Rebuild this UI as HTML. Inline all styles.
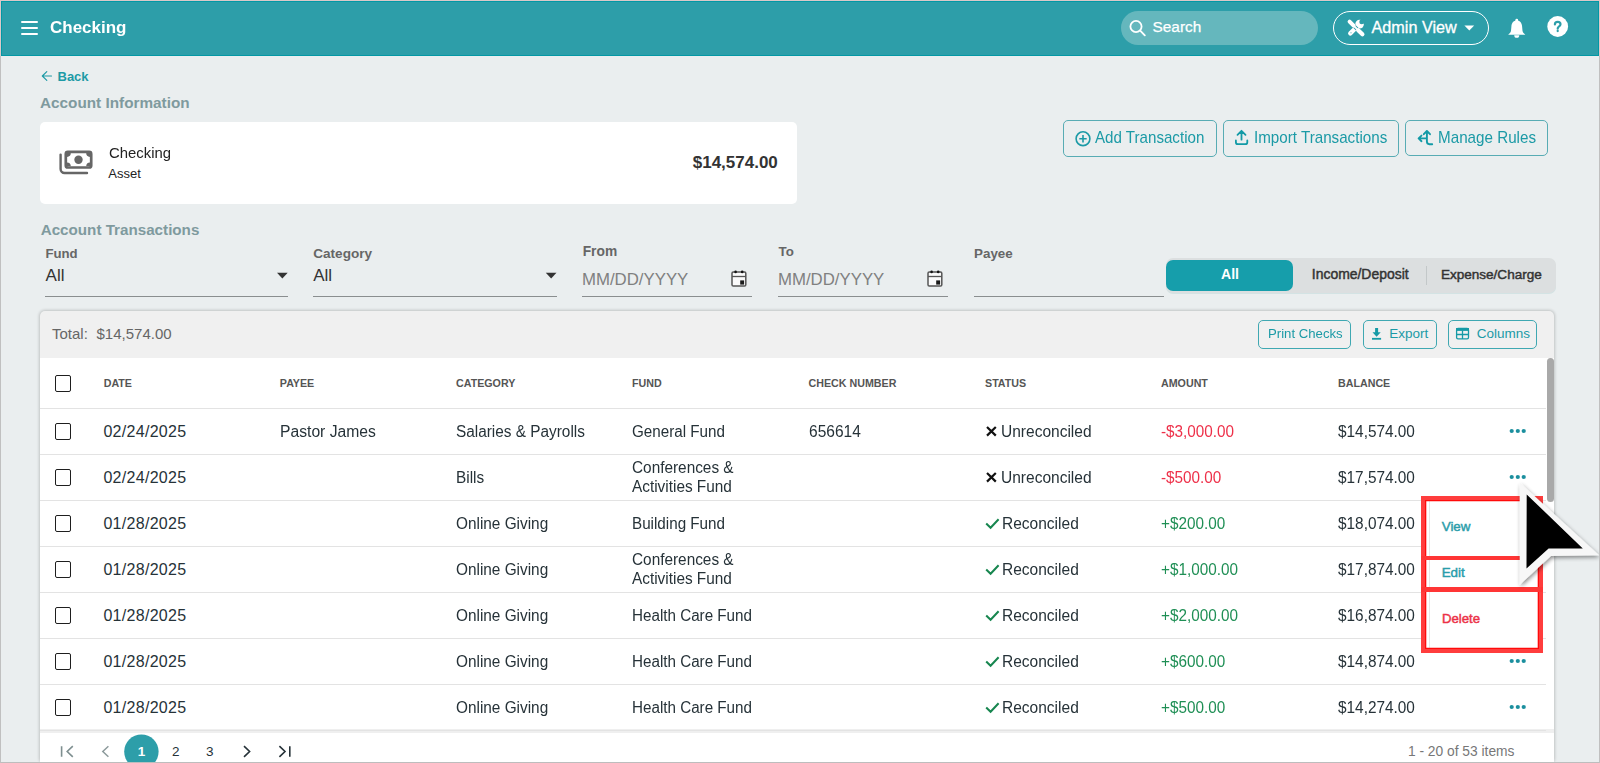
<!DOCTYPE html>
<html><head><meta charset="utf-8">
<style>
*{box-sizing:border-box;margin:0;padding:0}
html,body{width:1600px;height:763px;overflow:hidden;background:#c2c2c2;font-family:"Liberation Sans",sans-serif}
.abs{position:absolute}
.t{position:absolute;white-space:nowrap;line-height:1}
svg{position:absolute;overflow:visible}
#root{position:relative;width:1600px;height:763px;overflow:hidden}
</style></head><body><div id="root">

<div class="abs" style="left:0px;top:0px;width:1600px;height:1px;background:#dcc8c8"></div>
<div class="abs" style="left:0px;top:0px;width:1px;height:56px;background:#dcc8c8"></div>
<div class="abs" style="left:1599px;top:0px;width:1px;height:56px;background:#dcc8c8"></div>
<div class="abs" style="left:1px;top:1px;width:1598px;height:761px;background:#eaeeef"></div>
<div class="abs" style="left:1px;top:1px;width:1598px;height:55px;background:#2d9ea9;border:1px solid #0398a5"></div>
<div class="abs" style="left:21px;top:20.5px;width:17px;height:2px;background:#fff;border-radius:1px"></div>
<div class="abs" style="left:21px;top:26.5px;width:17px;height:2px;background:#fff;border-radius:1px"></div>
<div class="abs" style="left:21px;top:32.5px;width:17px;height:2px;background:#fff;border-radius:1px"></div>
<div class="t" style="left:49.50px;transform:scaleX(0.983);transform-origin:0 0;top:18.60px;font-size:17.3px;font-weight:700;color:#fff;">Checking</div>
<div class="abs" style="left:1121px;top:11px;width:197px;height:34px;background:#65b7bd;border-radius:17px"></div>
<svg style="left:0;top:0" width="1600" height="60"><circle cx="1136" cy="26.5" r="5.6" fill="none" stroke="#fff" stroke-width="1.8"/><line x1="1140.2" y1="30.7" x2="1144.8" y2="35.3" stroke="#fff" stroke-width="1.9" stroke-linecap="round"/></svg>
<div class="t" style="left:1152.50px;top:19.40px;font-size:15.4px;font-weight:400;color:#fff;-webkit-text-stroke:0.25px #fff">Search</div>
<div class="abs" style="left:1333px;top:10.5px;width:156px;height:34px;border:1.3px solid #fff;border-radius:17px"></div>
<div class="t" style="left:1371.50px;top:18.90px;font-size:16.2px;font-weight:400;color:#fff;-webkit-text-stroke:0.3px #fff">Admin View</div>
<svg style="left:0;top:0" width="1600" height="60"><polygon points="1464.4,25.5 1474.2,25.5 1469.3,30.6" fill="#fff"/></svg>
<svg style="left:0;top:0" width="1600" height="60"><line x1="1350.3" y1="33.4" x2="1357.2" y2="26.5" stroke="#fff" stroke-width="4.4" stroke-linecap="round"/><circle cx="1359.6" cy="24.1" r="4.3" fill="#fff"/><circle cx="1361.7" cy="21.9" r="2.4" fill="#2d9ea9"/><path d="M1361.7 21.9L1364.2 19.2L1366 21.2L1363.6 23.8z" fill="#2d9ea9"/><line x1="1353" y1="25" x2="1358.6" y2="30.6" stroke="#2d9ea9" stroke-width="3.6" stroke-linecap="butt"/><line x1="1349.6" y1="21.6" x2="1353.6" y2="25.6" stroke="#fff" stroke-width="4" stroke-linecap="round"/><line x1="1353" y1="25" x2="1358.6" y2="30.6" stroke="#fff" stroke-width="1.8"/><line x1="1358.2" y1="30.2" x2="1362.4" y2="34.2" stroke="#fff" stroke-width="4.2" stroke-linecap="round"/><circle cx="1351" cy="32.7" r="0.75" fill="#8fcbd0"/></svg>
<svg style="left:0;top:0" width="1600" height="60"><circle cx="1516.75" cy="20.2" r="1.4" fill="#fff"/><path d="M1516.75 20.6C1513.2 20.6 1511.6 23.4 1511.4 26.6L1511 30.8C1510.8 32.6 1509.4 33.6 1508.2 34.7L1525.3 34.7C1524.1 33.6 1522.7 32.6 1522.5 30.8L1522.1 26.6C1521.9 23.4 1520.3 20.6 1516.75 20.6Z" fill="#fff"/><path d="M1514.2 35.3A2.55 2.55 0 0 0 1519.3 35.3Z" fill="#fff"/><circle cx="1557.7" cy="26.5" r="10.4" fill="#fff"/><path d="M1554.9 24.4C1554.9 22.6 1556.1 21.9 1557.7 21.9C1559.4 21.9 1560.5 22.9 1560.5 24.3C1560.5 25.8 1559.4 26.3 1558.6 26.8C1557.9 27.3 1557.7 27.8 1557.7 28.7" fill="none" stroke="#2d9ea9" stroke-width="2.2" stroke-linecap="round"/><circle cx="1557.7" cy="31" r="1.15" fill="#2d9ea9"/></svg>
<svg style="left:0;top:0" width="200" height="100"><path d="M51.5 76H42.5M46.8 71.6L42.3 76L46.8 80.4" fill="none" stroke="#1d9aa6" stroke-width="1.15" stroke-linecap="round" stroke-linejoin="round"/></svg>
<div class="t" style="left:57.50px;top:70.00px;font-size:13px;font-weight:700;color:#1d9aa6;">Back</div>
<div class="t" style="left:40.00px;top:95.00px;font-size:15.3px;font-weight:700;color:#7f9a9e;">Account Information</div>
<div class="abs" style="left:40px;top:122px;width:757px;height:82px;background:#fff;border-radius:5px"></div>
<div class="t" style="left:108.90px;transform:scaleX(0.966);transform-origin:0 0;top:144.50px;font-size:15.4px;font-weight:400;color:#222;">Checking</div>
<div class="t" style="left:108.30px;top:167.20px;font-size:13px;font-weight:400;color:#222;">Asset</div>
<div class="t" style="right:822.20px;top:153.90px;font-size:17px;font-weight:700;color:#333;">$14,574.00</div>
<div class="abs" style="left:1063px;top:120px;width:154px;height:37px;border:1px solid #58acb4;border-radius:5px"></div>
<div class="abs" style="left:1222.5px;top:120px;width:176.5px;height:37px;border:1px solid #58acb4;border-radius:5px"></div>
<div class="abs" style="left:1405px;top:120px;width:143px;height:36px;border:1px solid #58acb4;border-radius:5px"></div>
<div class="t" style="left:1094.90px;transform:scaleX(0.952);transform-origin:0 0;top:130.20px;font-size:15.9px;font-weight:400;color:#1b9aa6;">Add Transaction</div>
<div class="t" style="left:1253.60px;transform:scaleX(0.955);transform-origin:0 0;top:130.30px;font-size:15.9px;font-weight:400;color:#1b9aa6;">Import Transactions</div>
<div class="t" style="left:1437.50px;transform:scaleX(0.957);transform-origin:0 0;top:130.10px;font-size:15.9px;font-weight:400;color:#1b9aa6;">Manage Rules</div>
<div class="t" style="left:40.70px;top:221.80px;font-size:15.2px;font-weight:700;color:#7f9a9e;">Account Transactions</div>
<div class="t" style="left:45.40px;top:246.90px;font-size:13.2px;font-weight:700;color:#666;">Fund</div>
<div class="t" style="left:45.60px;top:266.80px;font-size:17px;font-weight:400;color:#333;">All</div>
<div class="t" style="left:313.20px;top:246.90px;font-size:13.6px;font-weight:700;color:#666;">Category</div>
<div class="t" style="left:313.20px;top:266.80px;font-size:17px;font-weight:400;color:#333;">All</div>
<div class="t" style="left:582.70px;top:244.90px;font-size:13.8px;font-weight:700;color:#666;">From</div>
<div class="t" style="left:582.00px;top:272.00px;font-size:16.8px;font-weight:400;color:#7f8080;">MM/DD/YYYY</div>
<div class="t" style="left:778.60px;top:244.90px;font-size:13.3px;font-weight:700;color:#666;">To</div>
<div class="t" style="left:778.00px;top:272.00px;font-size:16.8px;font-weight:400;color:#7f8080;">MM/DD/YYYY</div>
<div class="t" style="left:974.00px;top:247.00px;font-size:13.4px;font-weight:700;color:#666;">Payee</div>
<svg style="left:0;top:0" width="1600" height="320"><polygon points="277,272.8 287.7,272.8 282.35,278.4" fill="#333"/><polygon points="545.8,272.8 556.5,272.8 551.15,278.4" fill="#333"/></svg>
<div class="abs" style="left:45px;top:295.5px;width:243px;height:1.5px;background:#8a8e8f"></div>
<div class="abs" style="left:313px;top:295.5px;width:244px;height:1.5px;background:#8a8e8f"></div>
<div class="abs" style="left:582px;top:295.5px;width:170px;height:1.5px;background:#8a8e8f"></div>
<div class="abs" style="left:778px;top:295.5px;width:170px;height:1.5px;background:#8a8e8f"></div>
<div class="abs" style="left:974px;top:295.5px;width:190px;height:1.5px;background:#8a8e8f"></div>
<div class="abs" style="left:1165.5px;top:258px;width:390.5px;height:35px;background:#dcdfe0;border-radius:7px;box-shadow:0 1px 0 #d3e3e4"></div>
<div class="abs" style="left:1166.3px;top:260px;width:126.5px;height:30.6px;background:#169eab;border-radius:7px"></div>
<div class="t" style="left:1230.00px;transform:translateX(-50%);top:267.00px;font-size:14px;font-weight:700;color:#fff;">All</div>
<div class="t" style="left:1311.80px;top:268.20px;font-size:13.95px;font-weight:400;color:#333;-webkit-text-stroke:0.45px currentColor">Income/Deposit</div>
<div class="abs" style="left:1425.5px;top:266px;width:1px;height:18.6px;background:#c3c8c9"></div>
<div class="t" style="left:1440.90px;top:268.20px;font-size:13.55px;font-weight:400;color:#333;-webkit-text-stroke:0.45px currentColor">Expense/Charge</div>
<div class="abs" style="left:40px;top:311px;width:1514px;height:452px;background:#f0f0f0;border-radius:5px;box-shadow:0 0 3px 1px rgba(0,0,0,.18)"></div>
<div class="t" style="left:52.00px;top:326.00px;font-size:15px;font-weight:400;color:#666;">Total:</div>
<div class="t" style="left:96.50px;top:326.00px;font-size:15px;font-weight:400;color:#666;">$14,574.00</div>
<div class="abs" style="left:1258.3px;top:320px;width:93.10000000000014px;height:29px;border:1px solid #3fa8b2;border-radius:5px"></div>
<div class="abs" style="left:1363.4px;top:320px;width:73.19999999999982px;height:29px;border:1px solid #3fa8b2;border-radius:5px"></div>
<div class="abs" style="left:1448.2px;top:320px;width:88.5px;height:29px;border:1px solid #3fa8b2;border-radius:5px"></div>
<div class="t" style="left:1267.50px;transform:scaleX(0.976);transform-origin:0 0;top:327.40px;font-size:13.5px;font-weight:400;color:#1b9aa6;">Print Checks</div>
<div class="t" style="left:1389.20px;top:327.40px;font-size:13.5px;font-weight:400;color:#1b9aa6;">Export</div>
<div class="t" style="left:1476.80px;top:327.40px;font-size:13.5px;font-weight:400;color:#1b9aa6;">Columns</div>
<div class="abs" style="left:40px;top:358px;width:1514px;height:371px;background:#fff"></div>
<div class="abs" style="left:40px;top:729px;width:1514px;height:4px;background:#efefef"></div>
<div class="abs" style="left:40px;top:733px;width:1514px;height:30px;background:#fff"></div>
<div class="abs" style="left:55px;top:375px;width:16.2px;height:16.6px;border:1.8px solid #1e1e1e;border-radius:2px"></div>
<div class="abs" style="left:40px;top:408px;width:1506px;height:1px;background:#e3e3e3"></div>
<div class="t" style="left:103.70px;top:378.00px;font-size:10.7px;font-weight:700;color:#555;">DATE</div>
<div class="t" style="left:279.80px;top:378.00px;font-size:10.7px;font-weight:700;color:#555;">PAYEE</div>
<div class="t" style="left:456.00px;top:378.00px;font-size:10.7px;font-weight:700;color:#555;">CATEGORY</div>
<div class="t" style="left:632.00px;top:378.00px;font-size:10.7px;font-weight:700;color:#555;">FUND</div>
<div class="t" style="left:808.50px;top:378.00px;font-size:10.7px;font-weight:700;color:#555;">CHECK NUMBER</div>
<div class="t" style="left:985.00px;top:378.00px;font-size:10.7px;font-weight:700;color:#555;">STATUS</div>
<div class="t" style="left:1161.00px;top:378.00px;font-size:10.7px;font-weight:700;color:#555;">AMOUNT</div>
<div class="t" style="left:1338.00px;top:378.00px;font-size:10.7px;font-weight:700;color:#555;">BALANCE</div>
<div class="abs" style="left:55px;top:423px;width:16.2px;height:16.6px;border:1.8px solid #1e1e1e;border-radius:2px"></div>
<div class="t" style="left:103.40px;top:424.10px;font-size:16px;font-weight:400;color:#263238;letter-spacing:0.3px">02/24/2025</div>
<div class="t" style="left:280.30px;transform:scaleX(0.98);transform-origin:0 0;top:424.10px;font-size:16px;font-weight:400;color:#263238;">Pastor James</div>
<div class="t" style="left:456.00px;transform:scaleX(0.96);transform-origin:0 0;top:424.10px;font-size:16px;font-weight:400;color:#263238;">Salaries &amp; Payrolls</div>
<div class="t" style="left:632.40px;transform:scaleX(0.95);transform-origin:0 0;top:424.10px;font-size:16px;font-weight:400;color:#263238;">General Fund</div>
<div class="t" style="left:809.00px;transform:scaleX(0.97);transform-origin:0 0;top:424.10px;font-size:16px;font-weight:400;color:#263238;">656614</div>
<div class="t" style="left:1000.90px;transform:scaleX(0.97);transform-origin:0 0;top:424.10px;font-size:16px;font-weight:400;color:#263238;">Unreconciled</div>
<div class="t" style="left:1161.40px;transform:scaleX(0.955);transform-origin:0 0;top:424.10px;font-size:16px;font-weight:400;color:#ee3049;">-$3,000.00</div>
<div class="t" style="left:1338.20px;transform:scaleX(0.96);transform-origin:0 0;top:424.10px;font-size:16px;font-weight:400;color:#263238;">$14,574.00</div>
<div class="abs" style="left:40px;top:454px;width:1506px;height:1px;background:#e3e3e3"></div>
<div class="abs" style="left:55px;top:469px;width:16.2px;height:16.6px;border:1.8px solid #1e1e1e;border-radius:2px"></div>
<div class="t" style="left:103.40px;top:470.10px;font-size:16px;font-weight:400;color:#263238;letter-spacing:0.3px">02/24/2025</div>
<div class="t" style="left:456.00px;transform:scaleX(0.96);transform-origin:0 0;top:470.10px;font-size:16px;font-weight:400;color:#263238;">Bills</div>
<div class="t" style="left:632.40px;transform:scaleX(0.96);transform-origin:0 0;top:460.20px;font-size:16px;font-weight:400;color:#263238;">Conferences &amp;</div>
<div class="t" style="left:632.40px;transform:scaleX(0.96);transform-origin:0 0;top:478.60px;font-size:16px;font-weight:400;color:#263238;">Activities Fund</div>
<div class="t" style="left:1000.90px;transform:scaleX(0.97);transform-origin:0 0;top:470.10px;font-size:16px;font-weight:400;color:#263238;">Unreconciled</div>
<div class="t" style="left:1161.40px;transform:scaleX(0.955);transform-origin:0 0;top:470.10px;font-size:16px;font-weight:400;color:#ee3049;">-$500.00</div>
<div class="t" style="left:1338.20px;transform:scaleX(0.96);transform-origin:0 0;top:470.10px;font-size:16px;font-weight:400;color:#263238;">$17,574.00</div>
<div class="abs" style="left:40px;top:500px;width:1506px;height:1px;background:#e3e3e3"></div>
<div class="abs" style="left:55px;top:515px;width:16.2px;height:16.6px;border:1.8px solid #1e1e1e;border-radius:2px"></div>
<div class="t" style="left:103.40px;top:516.10px;font-size:16px;font-weight:400;color:#263238;letter-spacing:0.3px">01/28/2025</div>
<div class="t" style="left:456.00px;transform:scaleX(0.96);transform-origin:0 0;top:516.10px;font-size:16px;font-weight:400;color:#263238;">Online Giving</div>
<div class="t" style="left:632.40px;transform:scaleX(0.95);transform-origin:0 0;top:516.10px;font-size:16px;font-weight:400;color:#263238;">Building Fund</div>
<div class="t" style="left:1002.30px;transform:scaleX(0.97);transform-origin:0 0;top:516.10px;font-size:16px;font-weight:400;color:#263238;">Reconciled</div>
<div class="t" style="left:1161.40px;transform:scaleX(0.955);transform-origin:0 0;top:516.10px;font-size:16px;font-weight:400;color:#1f8f55;">+$200.00</div>
<div class="t" style="left:1338.20px;transform:scaleX(0.96);transform-origin:0 0;top:516.10px;font-size:16px;font-weight:400;color:#263238;">$18,074.00</div>
<div class="abs" style="left:40px;top:546px;width:1506px;height:1px;background:#e3e3e3"></div>
<div class="abs" style="left:55px;top:561px;width:16.2px;height:16.6px;border:1.8px solid #1e1e1e;border-radius:2px"></div>
<div class="t" style="left:103.40px;top:562.10px;font-size:16px;font-weight:400;color:#263238;letter-spacing:0.3px">01/28/2025</div>
<div class="t" style="left:456.00px;transform:scaleX(0.96);transform-origin:0 0;top:562.10px;font-size:16px;font-weight:400;color:#263238;">Online Giving</div>
<div class="t" style="left:632.40px;transform:scaleX(0.96);transform-origin:0 0;top:552.20px;font-size:16px;font-weight:400;color:#263238;">Conferences &amp;</div>
<div class="t" style="left:632.40px;transform:scaleX(0.96);transform-origin:0 0;top:570.60px;font-size:16px;font-weight:400;color:#263238;">Activities Fund</div>
<div class="t" style="left:1002.30px;transform:scaleX(0.97);transform-origin:0 0;top:562.10px;font-size:16px;font-weight:400;color:#263238;">Reconciled</div>
<div class="t" style="left:1161.40px;transform:scaleX(0.955);transform-origin:0 0;top:562.10px;font-size:16px;font-weight:400;color:#1f8f55;">+$1,000.00</div>
<div class="t" style="left:1338.20px;transform:scaleX(0.96);transform-origin:0 0;top:562.10px;font-size:16px;font-weight:400;color:#263238;">$17,874.00</div>
<div class="abs" style="left:40px;top:592px;width:1506px;height:1px;background:#e3e3e3"></div>
<div class="abs" style="left:55px;top:607px;width:16.2px;height:16.6px;border:1.8px solid #1e1e1e;border-radius:2px"></div>
<div class="t" style="left:103.40px;top:608.10px;font-size:16px;font-weight:400;color:#263238;letter-spacing:0.3px">01/28/2025</div>
<div class="t" style="left:456.00px;transform:scaleX(0.96);transform-origin:0 0;top:608.10px;font-size:16px;font-weight:400;color:#263238;">Online Giving</div>
<div class="t" style="left:632.40px;transform:scaleX(0.95);transform-origin:0 0;top:608.10px;font-size:16px;font-weight:400;color:#263238;">Health Care Fund</div>
<div class="t" style="left:1002.30px;transform:scaleX(0.97);transform-origin:0 0;top:608.10px;font-size:16px;font-weight:400;color:#263238;">Reconciled</div>
<div class="t" style="left:1161.40px;transform:scaleX(0.955);transform-origin:0 0;top:608.10px;font-size:16px;font-weight:400;color:#1f8f55;">+$2,000.00</div>
<div class="t" style="left:1338.20px;transform:scaleX(0.96);transform-origin:0 0;top:608.10px;font-size:16px;font-weight:400;color:#263238;">$16,874.00</div>
<div class="abs" style="left:40px;top:638px;width:1506px;height:1px;background:#e3e3e3"></div>
<div class="abs" style="left:55px;top:653px;width:16.2px;height:16.6px;border:1.8px solid #1e1e1e;border-radius:2px"></div>
<div class="t" style="left:103.40px;top:654.10px;font-size:16px;font-weight:400;color:#263238;letter-spacing:0.3px">01/28/2025</div>
<div class="t" style="left:456.00px;transform:scaleX(0.96);transform-origin:0 0;top:654.10px;font-size:16px;font-weight:400;color:#263238;">Online Giving</div>
<div class="t" style="left:632.40px;transform:scaleX(0.95);transform-origin:0 0;top:654.10px;font-size:16px;font-weight:400;color:#263238;">Health Care Fund</div>
<div class="t" style="left:1002.30px;transform:scaleX(0.97);transform-origin:0 0;top:654.10px;font-size:16px;font-weight:400;color:#263238;">Reconciled</div>
<div class="t" style="left:1161.40px;transform:scaleX(0.955);transform-origin:0 0;top:654.10px;font-size:16px;font-weight:400;color:#1f8f55;">+$600.00</div>
<div class="t" style="left:1338.20px;transform:scaleX(0.96);transform-origin:0 0;top:654.10px;font-size:16px;font-weight:400;color:#263238;">$14,874.00</div>
<div class="abs" style="left:40px;top:684px;width:1506px;height:1px;background:#e3e3e3"></div>
<div class="abs" style="left:55px;top:699px;width:16.2px;height:16.6px;border:1.8px solid #1e1e1e;border-radius:2px"></div>
<div class="t" style="left:103.40px;top:700.10px;font-size:16px;font-weight:400;color:#263238;letter-spacing:0.3px">01/28/2025</div>
<div class="t" style="left:456.00px;transform:scaleX(0.96);transform-origin:0 0;top:700.10px;font-size:16px;font-weight:400;color:#263238;">Online Giving</div>
<div class="t" style="left:632.40px;transform:scaleX(0.95);transform-origin:0 0;top:700.10px;font-size:16px;font-weight:400;color:#263238;">Health Care Fund</div>
<div class="t" style="left:1002.30px;transform:scaleX(0.97);transform-origin:0 0;top:700.10px;font-size:16px;font-weight:400;color:#263238;">Reconciled</div>
<div class="t" style="left:1161.40px;transform:scaleX(0.955);transform-origin:0 0;top:700.10px;font-size:16px;font-weight:400;color:#1f8f55;">+$500.00</div>
<div class="t" style="left:1338.20px;transform:scaleX(0.96);transform-origin:0 0;top:700.10px;font-size:16px;font-weight:400;color:#263238;">$14,274.00</div>
<div class="abs" style="left:40px;top:730px;width:1506px;height:1px;background:#e3e3e3"></div>
<svg style="left:0;top:0" width="1600" height="763"><path d="M987 427 L995.8 435.6 M995.8 427 L987 435.6" stroke="#111" stroke-width="2.2" fill="none"/><circle cx="1511.7" cy="431" r="2.1" fill="#1b8f9e"/><circle cx="1517.8" cy="431" r="2.1" fill="#1b8f9e"/><circle cx="1523.7" cy="431" r="2.1" fill="#1b8f9e"/><path d="M987 473 L995.8 481.6 M995.8 473 L987 481.6" stroke="#111" stroke-width="2.2" fill="none"/><circle cx="1511.7" cy="477" r="2.1" fill="#1b8f9e"/><circle cx="1517.8" cy="477" r="2.1" fill="#1b8f9e"/><circle cx="1523.7" cy="477" r="2.1" fill="#1b8f9e"/><path d="M986.2 523.5 L990.6 527.8 L998.6 519.2" stroke="#17864f" stroke-width="2" fill="none"/><circle cx="1511.7" cy="523" r="2.1" fill="#1b8f9e"/><circle cx="1517.8" cy="523" r="2.1" fill="#1b8f9e"/><circle cx="1523.7" cy="523" r="2.1" fill="#1b8f9e"/><path d="M986.2 569.5 L990.6 573.8 L998.6 565.2" stroke="#17864f" stroke-width="2" fill="none"/><circle cx="1511.7" cy="569" r="2.1" fill="#1b8f9e"/><circle cx="1517.8" cy="569" r="2.1" fill="#1b8f9e"/><circle cx="1523.7" cy="569" r="2.1" fill="#1b8f9e"/><path d="M986.2 615.5 L990.6 619.8 L998.6 611.2" stroke="#17864f" stroke-width="2" fill="none"/><circle cx="1511.7" cy="615" r="2.1" fill="#1b8f9e"/><circle cx="1517.8" cy="615" r="2.1" fill="#1b8f9e"/><circle cx="1523.7" cy="615" r="2.1" fill="#1b8f9e"/><path d="M986.2 661.5 L990.6 665.8 L998.6 657.2" stroke="#17864f" stroke-width="2" fill="none"/><circle cx="1511.7" cy="661" r="2.1" fill="#1b8f9e"/><circle cx="1517.8" cy="661" r="2.1" fill="#1b8f9e"/><circle cx="1523.7" cy="661" r="2.1" fill="#1b8f9e"/><path d="M986.2 707.5 L990.6 711.8 L998.6 703.2" stroke="#17864f" stroke-width="2" fill="none"/><circle cx="1511.7" cy="707" r="2.1" fill="#1b8f9e"/><circle cx="1517.8" cy="707" r="2.1" fill="#1b8f9e"/><circle cx="1523.7" cy="707" r="2.1" fill="#1b8f9e"/></svg>
<div class="abs" style="left:1547px;top:358px;width:7px;height:144px;background:#a9a9a9;border-radius:4px"></div>
<svg style="left:0;top:0" width="1600" height="763"><circle cx="141.4" cy="751.6" r="17.2" fill="#2d9ea9"/><path d="M61.6 746.2V756.7M72.8 746.2L67.2 751.5L72.8 756.8" stroke="#7e8f90" stroke-width="1.6" fill="none"/><path d="M108.4 746.2L102.8 751.5L108.4 756.8" stroke="#8d9b9c" stroke-width="1.5" fill="none"/><path d="M244 746.2L249.6 751.5L244 756.8" stroke="#263238" stroke-width="1.6" fill="none"/><path d="M279.4 746.2L285 751.5L279.4 756.8M289.8 746.2V756.8" stroke="#263238" stroke-width="1.6" fill="none"/></svg>
<div class="t" style="left:141.50px;transform:translateX(-50%);top:745.30px;font-size:13.5px;font-weight:700;color:#fff;">1</div>
<div class="t" style="left:175.80px;transform:translateX(-50%);top:745.30px;font-size:13.5px;font-weight:400;color:#263238;">2</div>
<div class="t" style="left:209.80px;transform:translateX(-50%);top:745.30px;font-size:13.5px;font-weight:400;color:#263238;">3</div>
<div class="t" style="right:85.50px;top:745.30px;font-size:13.8px;font-weight:400;color:#777;">1 - 20 of 53 items</div>
<div class="abs" style="left:1426px;top:501px;width:113px;height:147px;background:#fff"></div>
<div class="abs" style="left:1429px;top:501px;width:1px;height:147px;background:#e6e6e6"></div>
<div class="abs" style="left:1538px;top:501px;width:1px;height:147px;background:#e6e6e6"></div>
<div class="t" style="left:1441.70px;top:520.40px;font-size:13.4px;font-weight:400;color:#2a9daa;-webkit-text-stroke:0.45px currentColor">View</div>
<div class="t" style="left:1441.70px;top:566.20px;font-size:13.4px;font-weight:400;color:#2a9daa;-webkit-text-stroke:0.45px currentColor">Edit</div>
<div class="t" style="left:1441.90px;top:611.90px;font-size:13.2px;font-weight:400;color:#ec3147;-webkit-text-stroke:0.45px currentColor">Delete</div>
<div class="abs" style="left:1421px;top:496px;width:122.3px;height:156.8px;border:4.8px solid #ff3d3d;box-shadow:inset 0 0 0 1.3px #ff0a0a"></div>
<div class="abs" style="left:1421px;top:555.8px;width:122px;height:4.1px;background:#ff3535"></div>
<div class="abs" style="left:1421px;top:587px;width:122px;height:4.9px;background:#ff3535"></div>
<svg style="left:0;top:0" width="1600" height="763"><rect x="65.8" y="151.9" width="25.4" height="15.6" rx="2" fill="none" stroke="#666" stroke-width="2.7"/><path d="M67 153.1h3.8a3.8 3.8 0 0 1 -3.8 3.8z M90 153.1h-3.8a3.8 3.8 0 0 0 3.8 3.8z M67 166.3h3.8a3.8 3.8 0 0 0 -3.8 -3.8z M90 166.3h-3.8a3.8 3.8 0 0 1 3.8 -3.8z" fill="#666"/><circle cx="78.5" cy="159.8" r="4.2" fill="#666"/><path d="M60.6 154.6V169a4 4 0 0 0 4 4H87" fill="none" stroke="#666" stroke-width="2.4" stroke-linecap="round"/><g transform="translate(0,0)"><rect x="732" y="272" width="13.8" height="14" rx="1.3" fill="#fafafa" stroke="#555" stroke-width="1.5"/><line x1="732" y1="276.5" x2="745.8" y2="276.5" stroke="#555" stroke-width="1.3"/><circle cx="735.6" cy="271.9" r="1.3" fill="#111"/><circle cx="742.2" cy="271.9" r="1.3" fill="#111"/><rect x="740.2" y="280.4" width="3.9" height="4.2" fill="#1a1a1a"/></g><g transform="translate(196,0)"><rect x="732" y="272" width="13.8" height="14" rx="1.3" fill="#fafafa" stroke="#555" stroke-width="1.5"/><line x1="732" y1="276.5" x2="745.8" y2="276.5" stroke="#555" stroke-width="1.3"/><circle cx="735.6" cy="271.9" r="1.3" fill="#111"/><circle cx="742.2" cy="271.9" r="1.3" fill="#111"/><rect x="740.2" y="280.4" width="3.9" height="4.2" fill="#1a1a1a"/></g><circle cx="1083" cy="138.7" r="6.9" fill="none" stroke="#1b9aa6" stroke-width="1.6"/><path d="M1083 135v7.4M1079.3 138.7h7.4" stroke="#1b9aa6" stroke-width="1.6"/><path d="M1241.5 139.7V131M1237.5 134.8L1241.5 130.8L1245.5 134.8" fill="none" stroke="#129aa6" stroke-width="1.8" stroke-linecap="round" stroke-linejoin="round"/><path d="M1235.9 140.4V142.2a2 2 0 0 0 2 2H1245.3a2 2 0 0 0 2 -2V140.4" fill="none" stroke="#129aa6" stroke-width="1.8" stroke-linecap="round"/><path d="M1426.9 131.2V141.6a2.6 2.6 0 0 0 2.6 2.6H1432.2M1423.8 134.2L1426.9 131L1430 134.2M1426.9 138.4H1418.8M1421.5 135.6L1418.6 138.4L1421.5 141.2" fill="none" stroke="#129aa6" stroke-width="1.9" stroke-linecap="round" stroke-linejoin="round"/><path d="M1375.1 328h3v4.2h2.6l-4.1 4.6l-4.1 -4.6h2.6z" fill="#169aa6"/><rect x="1372" y="337.9" width="9.1" height="1.8" fill="#169aa6"/><rect x="1456.6" y="328.5" width="11.9" height="10.4" rx="1.4" fill="none" stroke="#169aa6" stroke-width="1.3"/><rect x="1456" y="328" width="13" height="2.9" fill="#169aa6"/><path d="M1462.5 330.5V339M1456.6 334.5H1468.5" stroke="#169aa6" stroke-width="1.3"/></svg>
<svg style="left:0;top:0" width="1600" height="763"><defs><filter id="sh" x="-30%" y="-30%" width="160%" height="160%"><feGaussianBlur in="SourceAlpha" stdDeviation="2"/><feOffset dx="1" dy="2"/><feComponentTransfer><feFuncA type="linear" slope="0.45"/></feComponentTransfer><feMerge><feMergeNode/><feMergeNode in="SourceGraphic"/></feMerge></filter></defs><polygon filter="url(#sh)" points="1519.7,482.6 1599.2,555.2 1550.9,556 1519.8,584.7" fill="#f7f7f7"/><polygon points="1526.7,494.4 1582.8,548.5 1548.6,548.5 1526.5,568.6" fill="#000"/></svg>
<div class="abs" style="left:0px;top:762px;width:1600px;height:1px;background:#bdbdbd"></div>
<div class="abs" style="left:0px;top:56px;width:1px;height:707px;background:#c0c0c0"></div>
<div class="abs" style="left:1599px;top:56px;width:1px;height:707px;background:#c0c0c0"></div>
</div></body></html>
